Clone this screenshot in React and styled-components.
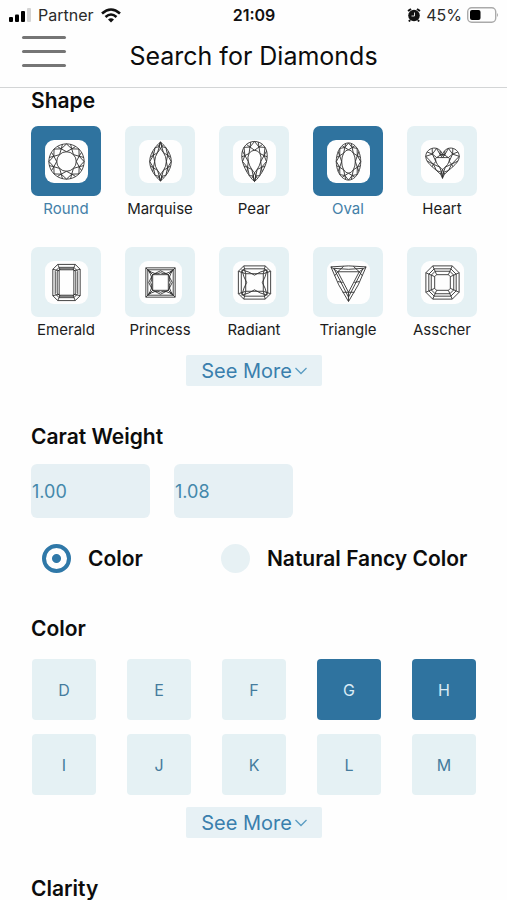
import { useState } from "react";
import styled, { createGlobalStyle } from "styled-components";

const GlobalStyle = createGlobalStyle`
* {
    box-sizing: border-box;
}

body {
    margin: 0;
    background: #fefefe;
    color: #0c0c0c;
    font-family: Inter, "Liberation Sans", sans-serif;
}

button, input {
    font-family: inherit;
}
`

const Screen = styled.div`
display: flex;
flex-direction: column;
height: 100vh;
`

const StatusBar = styled.div`
display: grid;
grid-template-columns: 1fr auto 1fr;
align-items: center;
height: 30px;
padding: 0 8px 0 9px;
font-size: 16px;
color: #2a2a2a;
`

const StatusGroup = styled.div`
display: flex;
align-items: center;
justify-content: ${({ $end }) => $end ? 'flex-end' : 'flex-start'};
gap: ${({ $end }) => $end ? '5px' : '7px'};
`

const Clock = styled.time`
font-weight: 600;
color: #111;
`

const Header = styled.header`
display: grid;
grid-template-columns: 1fr auto 1fr;
height: 58px;
border-bottom: 1px solid #d3d5d6;
`

const MenuButton = styled.button`
display: flex;
flex-direction: column;
gap: 11px;
align-self: start;
justify-self: start;
margin-left: 22px;
padding: 6px 0;
border: 0;
background: none;

span {
    width: 44px;
    height: 3px;
    border-radius: 2px;
    background: #757575;
}
`

const Title = styled.h1`
margin: 0;
font-size: 25px;
font-weight: 400;
line-height: 53px;
`

const Main = styled.main`
flex: 1;
min-height: 0;
overflow-y: auto;
scrollbar-width: none;
padding: 0 30px 0 31px;
`

const Section = styled.section`
display: flex;
flex-direction: column;
margin-bottom: ${({ $space }) => $space || '38px'};
`

const Heading = styled.h2`
margin: 0 0 ${({ $space }) => $space || '12px'};
font-size: 21px;
font-weight: 600;
line-height: 26px;
`

const ShapeGrid = styled.div`
display: grid;
grid-template-columns: repeat(5, 70px);
justify-content: space-between;
row-gap: 25px;
`

const ShapeButton = styled.button`
display: flex;
flex-direction: column;
align-items: center;
padding: 0;
border: 0;
background: none;
font-size: 15px;
line-height: 26px;
color: ${({ $active }) => $active ? '#4480a8' : '#1c1c1c'};
`

const ShapeTile = styled.span`
display: flex;
align-items: center;
justify-content: center;
width: 70px;
height: 70px;
border-radius: 7px;
background: ${({ $active }) => $active ? '#2f739f' : '#e5f1f4'};

svg {
    border-radius: 9px;
    background: #fefefe;
}
`

const SeeMoreButton = styled.button`
display: flex;
align-items: center;
align-self: center;
gap: 3px;
height: 31px;
margin-top: 12px;
padding: 0 15px;
border: 0;
border-radius: 2px;
background: #e7f1f5;
color: #3a7fad;
font-size: 20px;
`

const CaratRow = styled.div`
display: flex;
gap: 24px;
`

const CaratInput = styled.input`
width: 119px;
height: 54px;
padding: 0 1px;
border: 0;
border-radius: 6px;
background: #e6f0f4;
color: #4488ab;
font-size: 18px;
`

const RadioRow = styled.div`
display: flex;
gap: 78px;
margin: 25px 0 43px 11px;
`

const RadioLabel = styled.label`
display: flex;
align-items: center;
gap: 17px;
height: 30px;
font-size: 21px;
font-weight: 600;
white-space: nowrap;
`

const Radio = styled.input`
appearance: none;
width: 29px;
height: 29px;
margin: 0;
border-radius: 50%;
background: #e7f1f4;

&:checked {
    border: 4px solid #2f78a8;
    background: radial-gradient(circle, #2f78a8 4px, #fefefe 5px);
}
`

const ColorGrid = styled.div`
display: grid;
grid-template-columns: repeat(5, 64px);
justify-content: space-between;
row-gap: 14px;
padding: 0 1px;
`

const ColorButton = styled.button`
height: 61px;
padding: 0;
border: 0;
border-radius: 4px;
background: ${({ $active }) => $active ? '#2f739f' : '#e5f1f4'};
color: ${({ $active }) => $active ? '#d9ebf5' : '#457c9d'};
font-size: 16px;
`

// Outlines of the curved cuts, a runs from 0 (top) to 2 PI around the centre
const ellipse = (w, h) => (a) => [w * Math.sin(a), -h * Math.cos(a)]
const lens = (w, h) => (a) => [w * Math.sin(a) * Math.abs(Math.sin(a)), -h * Math.cos(a)]
const drop = (w, h) => (a) => [w * 1.2 * Math.sin(a) * Math.abs(Math.cos(a / 2)) ** 0.8, -h * Math.cos(a)]
const heart = (s, dy) => (a) => [
    s * 16 * Math.sin(a) ** 3,
    dy - s * (13 * Math.cos(a) - 5 * Math.cos(2 * a) - 2 * Math.cos(3 * a) - Math.cos(4 * a)),
]
// table of the heart cut: a drop with its top cut flat
const shield = (w, h, top) => (a) => {
    const [x, y] = drop(w, h)(a)
    return [x, Math.max(y, top)]
}

const toPath = (points, close = true) =>
    'M' + points.map(([x, y]) => `${x.toFixed(2)} ${y.toFixed(2)}`).join('L') + (close ? 'Z' : '')

const facets = (outer, inner, n = 8) => {
    const step = (2 * Math.PI) / n
    const mid = (a) => {
        const [x1, y1] = outer(a)
        const [x2, y2] = inner(a)
        return [x1 * 0.5 + x2 * 0.5, y1 * 0.5 + y2 * 0.5]
    }
    let d = toPath(Array.from({ length: 72 }, (_, i) => outer((i * Math.PI) / 36)))
    d += toPath(Array.from({ length: n * 2 }, (_, i) => inner((i * step) / 2)))
    for (let k = 0; k < n; k++) {
        const a = k * step
        const m = mid(a + step / 2)
        d += toPath([inner(a), m, inner(a + step)], false)
        d += toPath([outer(a), m, outer(a + step)], false)
        d += toPath([outer(a + step * 0.3), m, outer(a + step * 0.7)], false)
    }
    return d
}

const octagon = (w, h, c) => [
    [-w + c, -h], [w - c, -h], [w, -h + c], [w, h - c],
    [w - c, h], [-w + c, h], [-w, h - c], [-w, -h + c],
]

const stepCut = (rings) => {
    const shapes = rings.map(([w, h, c]) => octagon(w, h, c))
    const first = shapes[0]
    const last = shapes[shapes.length - 1]
    return shapes.map((s) => toPath(s)).join('') +
        first.map((p, i) => toPath([p, last[i]], false)).join('')
}

const cuts = {
    Round: facets(ellipse(18, 18), ellipse(10, 10)),
    Marquise: facets(lens(11, 20), lens(6, 13)),
    Pear: facets(drop(13.5, 20.5), drop(7, 11.5)),
    Oval: facets(ellipse(12.5, 19), ellipse(7, 12)),
    Heart: facets(heart(1.07, -1), shield(7.5, 8, -4)),
    Emerald: stepCut([[14, 18.5, 5], [11.5, 15.5, 4], [9.5, 14, 3], [7.5, 13, 1]]),
    Princess: 'M-15-15H15V15H-15ZM-13-13H13V13H-13ZM-8-8H8V8H-8Z' +
        'M-15-15L-8-8M15-15L8-8M15 15L8 8M-15 15L-8 8' +
        'M-13-13Q-5-7 0-10Q5-7 13-13Q7-5 10 0Q7 5 13 13Q5 7 0 10Q-5 7-13 13Q-7 5-10 0Q-7-5-13-13Z' +
        'M-8-8L0-12L8-8L12 0L8 8L0 12L-8 8L-12 0Z',
    Radiant: toPath(octagon(16.5, 17, 5.5)) + toPath(octagon(13.5, 14, 3)) +
        'M-9-9H9V9H-9Z' +
        'M-11-17L-9-9L-16.500-11.500M11-17L9-9L16.500-11.500M11 17L9 9L16.500 11.500M-11 17L-9 9L-16.500 11.500' +
        'M-13-13Q-5-11 0-7.500Q5-11 13-13Q11-5 8 0Q11 5 13 13Q5 11 0 7.500Q-5 11-13 13Q-11 5-8 0Q-11-5-13-13Z',
    Triangle: 'M-18-16L0-17L18-16Q11 3 0 19.500Q-11 3-18-16Z' +
        'M-15-14.500L0-13.500L15-14.500L0 15ZM-11-11H11L0 10Z' +
        'M-18-16L-11-11L-5-16.500M5-16.500L11-11L18-16' +
        'M-14-7L-11-11M14-7L11-11M-6 10L0 10L6 10M0 10V19M-11-1L-6 0M11-1L6 0',
    Asscher: stepCut([[17, 17, 7], [14, 14, 5.5], [11.5, 11.5, 4], [8, 8, 2]]),
}

const CutIcon = ({ name }) => (
    <svg width="43" height="43" viewBox="-22 -22 44 44" aria-hidden="true">
        <path d={cuts[name]} fill="none" stroke="#2c2c2c" strokeWidth="0.9" strokeLinejoin="round" />
    </svg>
)

const SeeMore = () => (
    <SeeMoreButton type="button">
        See More
        <svg width="12" height="8" viewBox="0 0 12 8" fill="none" stroke="#5a9cc2" strokeWidth="1.3" aria-hidden="true">
            <path d="M0.500 1L6 6.500L11.500 1" />
        </svg>
    </SeeMoreButton>
)

const colors = ['D', 'E', 'F', 'G', 'H', 'I', 'J', 'K', 'L', 'M']

const toggle = (list, item) =>
    list.includes(item) ? list.filter((i) => i !== item) : [...list, item]

const App = () => {
    const [shapes, setShapes] = useState(['Round', 'Oval'])
    const [picked, setPicked] = useState(['G', 'H'])
    const [mode, setMode] = useState('color')

    return (
        <Screen>
            <GlobalStyle />
            <StatusBar>
                <StatusGroup>
                    <svg width="22" height="14" viewBox="0 0 22 14" aria-hidden="true">
                        <rect x="0" y="9" width="4" height="5" rx="1" />
                        <rect x="6" y="6.500" width="4" height="7.500" rx="1" />
                        <rect x="12" y="3" width="4" height="11" rx="1" />
                        <rect x="18" y="0" width="4" height="14" rx="1" fill="#d4d4d4" />
                    </svg>
                    Partner
                    <svg width="20" height="15" viewBox="0 0 20 15" fill="none" stroke="#111" strokeWidth="2.6" aria-hidden="true">
                        <path d="M1 5.500Q10-2.500 19 5.500M4.500 9Q10 4 15.500 9" />
                        <path d="M10 14.500L7 11.500Q10 9 13 11.500Z" fill="#111" stroke="none" />
                    </svg>
                </StatusGroup>
                <Clock>21:09</Clock>
                <StatusGroup $end>
                    <svg width="14" height="14" viewBox="0 0 14 14" aria-hidden="true">
                        <circle cx="7" cy="7.500" r="5.800" fill="#111" />
                        <path d="M1 3L4 1M13 3L10 1M3 12L2 13.500M11 12L12 13.500" stroke="#111" strokeWidth="2" />
                        <path d="M7.500 4.500V8H4.500" fill="none" stroke="#ddd" />
                    </svg>
                    45%
                    <svg width="32" height="16" viewBox="0 0 32 16" aria-hidden="true">
                        <rect x="0.700" y="0.700" width="28" height="14.500" rx="4" fill="none" stroke="#aaa" strokeWidth="1.400" />
                        <rect x="3" y="3" width="10.500" height="10" rx="2" />
                        <path d="M30 6Q32 8 30 10Z" fill="#aaa" />
                    </svg>
                </StatusGroup>
            </StatusBar>
            <Header>
                <MenuButton type="button" aria-label="Menu">
                    <span />
                    <span />
                    <span />
                </MenuButton>
                <Title>Search for Diamonds</Title>
            </Header>
            <Main>
                <Section>
                    <Heading>Shape</Heading>
                    <ShapeGrid>
                        {Object.keys(cuts).map((name) => {
                            const active = shapes.includes(name)
                            return (
                                <ShapeButton
                                    key={name}
                                    type="button"
                                    $active={active}
                                    aria-pressed={active}
                                    onClick={() => setShapes(toggle(shapes, name))}
                                >
                                    <ShapeTile $active={active}>
                                        <CutIcon name={name} />
                                    </ShapeTile>
                                    {name}
                                </ShapeButton>
                            )
                        })}
                    </ShapeGrid>
                    <SeeMore />
                </Section>
                <Section $space="0">
                    <Heading $space="14px">Carat Weight</Heading>
                    <CaratRow>
                        <CaratInput type="text" inputMode="decimal" defaultValue="1.00" aria-label="Minimum carat weight" />
                        <CaratInput type="text" inputMode="decimal" defaultValue="1.08" aria-label="Maximum carat weight" />
                    </CaratRow>
                </Section>
                <RadioRow>
                    <RadioLabel>
                        <Radio type="radio" name="mode" checked={mode === 'color'} onChange={() => setMode('color')} />
                        Color
                    </RadioLabel>
                    <RadioLabel>
                        <Radio type="radio" name="mode" checked={mode === 'fancy'} onChange={() => setMode('fancy')} />
                        Natural Fancy Color
                    </RadioLabel>
                </RadioRow>
                <Section>
                    <Heading $space="17px">Color</Heading>
                    <ColorGrid>
                        {colors.map((color) => (
                            <ColorButton
                                key={color}
                                type="button"
                                $active={picked.includes(color)}
                                aria-pressed={picked.includes(color)}
                                onClick={() => setPicked(toggle(picked, color))}
                            >
                                {color}
                            </ColorButton>
                        ))}
                    </ColorGrid>
                    <SeeMore />
                </Section>
                <Section>
                    <Heading>Clarity</Heading>
                </Section>
            </Main>
        </Screen>
    )
}

export default App
